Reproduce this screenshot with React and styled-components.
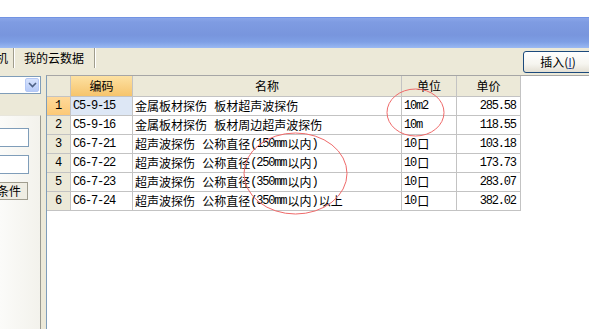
import React from "react";
import styled, { createGlobalStyle } from "styled-components";

const GlobalStyle = createGlobalStyle`
  html, body { margin: 0; padding: 0; background: #fff; }
  body { width: 589px; height: 329px; overflow: hidden; font-family: "Noto Sans CJK SC", "Liberation Sans", sans-serif; font-size: 12px; color: #000; }
  #root { width: 589px; height: 329px; }
`;

const Page = styled.div`
  width: 589px;
  height: 329px;
  display: flex;
  flex-direction: column;
  overflow: hidden;
`;

const TopBlank = styled.div`
  height: 17px;
  background: #fff;
  flex: none;
`;

const TitleBar = styled.div`
  height: 31px;
  flex: none;
  background: linear-gradient(
    #5a80dc 0px,
    #8aa6e9 1px,
    #7f9ce2 5px,
    #7895dd 18px,
    #7e9fe5 25px,
    #9ab9f3 31px
  );
`;

const Workspace = styled.div`
  flex: 1;
  background: #ece9d8;
  display: flex;
  flex-direction: column;
  min-height: 0;
`;

const TabRow = styled.div`
  height: 27px;
  flex: none;
  display: flex;
  align-items: flex-start;
`;

const Tab = styled.div`
  height: 20px;
  display: flex;
  align-items: center;
  padding: 0 ${(p) => p.$padR}px 0 10px;
  margin-left: ${(p) => p.$shift || 0}px;
  border-right: 1px solid #9f9c8c;
  box-shadow: 1px 0 0 #fff;
  font-size: 12px;
  line-height: 12px;
  white-space: nowrap;
  margin-top: 0px;
`;

const InsertButton = styled.button`
  margin-left: auto;
  margin-right: -4px;
  margin-top: 3px;
  width: 70px;
  height: 22px;
  border: 1px solid #1c4a7c;
  border-radius: 3px;
  background: linear-gradient(#ffffff 0%, #f6f5ef 60%, #e3dfd3 100%);
  font-family: "Noto Sans CJK SC", sans-serif;
  font-size: 12px;
  line-height: 12px;
  padding: 0;
  color: #000;
  display: flex;
  align-items: center;
  justify-content: center;
`;

const Hotkey = styled.span`
  text-decoration: underline;
  color: #1b3f9a;
`;

const Body = styled.div`
  flex: 1;
  display: flex;
  min-height: 0;
`;

const SidePanel = styled.div`
  width: 46px;
  flex: none;
  display: flex;
  flex-direction: column;
`;

const Combo = styled.div`
  margin-top: 1px;
  width: 41px;
  height: 18px;
  box-sizing: border-box;
  border: 1px solid #7f9db9;
  border-left: none;
  background: #fff;
  display: flex;
  justify-content: flex-end;
  align-items: stretch;
  padding: 1px;
`;

const DropButton = styled.div`
  width: 14px;
  border-radius: 2px;
  background: linear-gradient(#d7e3fd, #b7cbf8);
  border: 1px solid #b4c8f5;
  box-sizing: border-box;
  display: flex;
  align-items: center;
  justify-content: center;
`;

const FilterBox = styled.div`
  margin-top: 21px;
  width: 41px;
  flex: 1;
  box-sizing: border-box;
  border-right: 1px solid #9a9a90;
  border-top: 1px solid #e8e6dc;
  background: linear-gradient(90deg, #fbfbf9, #f3f2ec);
  display: flex;
  flex-direction: column;
  gap: 8px;
  padding-top: 12px;
  overflow: hidden;
`;

const Field = styled.div`
  width: 29px;
  height: 19px;
  box-sizing: border-box;
  border: 1px solid #7f9db9;
  border-left: none;
  background: #fff;
  flex: none;
`;

const CondButton = styled.div`
  flex: none;
  width: 62px;
  height: 18px;
  margin-left: -34px;
  box-sizing: border-box;
  border: 1px solid #a09d8f;
  background: #efede3;
  display: flex;
  align-items: center;
  justify-content: center;
  font-size: 12px;
  line-height: 12px;
  white-space: nowrap;
`;

const GridFrame = styled.div`
  position: relative;
  flex: 1;
  background: #fff;
  border-left: 1px solid #7f9db9;
  border-top: 1px solid #a6a6a6;
  overflow: hidden;
`;

const Row = styled.div`
  display: grid;
  grid-template-columns: 24px 62px 269px 55px 64px;
  height: ${(p) => (p.$header ? 21 : 19)}px;
`;

const Cell = styled.div`
  box-sizing: border-box;
  border-right: 1px solid #c3c3c3;
  border-bottom: 1px solid #c3c3c3;
  display: flex;
  align-items: center;
  justify-content: ${(p) => p.$align || "flex-start"};
  padding: 0 ${(p) => (p.$align === "flex-end" ? 3 : 2)}px 0 ${(p) => (p.$align === "flex-end" ? 0 : 2)}px;
  background: ${(p) => p.$bg || "#fff"};
  font-size: 12px;
  line-height: 12px;
  white-space: pre;
  overflow: hidden;
  font-family: "Noto Sans CJK SC", sans-serif;
`;

const Mono = styled.span`
  font-family: "Liberation Mono", monospace;
  font-size: 12px;
  letter-spacing: -1.2px;
  margin-right: 1.2px;
`;

const Overlay = styled.svg`
  position: absolute;
  left: 0;
  top: 0;
  width: 100%;
  height: 100%;
  pointer-events: none;
`;

const BEIGE = "#ece9d8";
const ORANGE = "linear-gradient(#fde1a2, #f6c46c)";
const SEL_ROW = "linear-gradient(#ffd99a, #fcc977)";
const SEL_CELL = "#dde7f5";

// Split text into runs of ASCII (half-width) and CJK (full-width)
function Mixed({ text }) {
  const parts = text.match(/[\x20-\x7e]+|[^\x20-\x7e]+/g) || [];
  return parts.map((p, i) =>
    /^[\x20-\x7e]+$/.test(p) ? <Mono key={i}>{p}</Mono> : <React.Fragment key={i}>{p}</React.Fragment>
  );
}

const rows = [
  ["C5-9-15", "金属板材探伤 板材超声波探伤", "10m2", "285.58"],
  ["C5-9-16", "金属板材探伤 板材周边超声波探伤", "10m", "118.55"],
  ["C6-7-21", "超声波探伤 公称直径(150mm以内)", "10口", "103.18"],
  ["C6-7-22", "超声波探伤 公称直径(250mm以内)", "10口", "173.73"],
  ["C6-7-23", "超声波探伤 公称直径(350mm以内)", "10口", "283.07"],
  ["C6-7-24", "超声波探伤 公称直径(350mm以内)以上", "10口", "382.02"],
];

export default function App() {
  return (
    <Page>
      <GlobalStyle />
      <TopBlank />
      <TitleBar />
      <Workspace>
        <TabRow>
          <Tab $shift={-26} $padR={5}>单机</Tab>
          <Tab $padR={10}>我的云数据</Tab>
          <InsertButton>
            插入(<Hotkey>I</Hotkey>)
          </InsertButton>
        </TabRow>
        <Body>
          <SidePanel>
            <Combo>
              <DropButton>
                <svg width="9" height="6" viewBox="0 0 9 6">
                  <path d="M1 1 L4.5 4.5 L8 1" fill="none" stroke="#4d6185" strokeWidth="1.6" />
                </svg>
              </DropButton>
            </Combo>
            <FilterBox>
              <Field />
              <Field />
              <CondButton>查询条件</CondButton>
            </FilterBox>
          </SidePanel>
          <GridFrame>
            <Row $header>
              <Cell $bg={BEIGE} />
              <Cell $bg={ORANGE} $align="center">编码</Cell>
              <Cell $bg={BEIGE} $align="center">名称</Cell>
              <Cell $bg={BEIGE} $align="center">单位</Cell>
              <Cell $bg={BEIGE} $align="center">单价</Cell>
            </Row>
            {rows.map((r, i) => (
              <Row key={r[0]}>
                <Cell $bg={i === 0 ? SEL_ROW : BEIGE} $align="center">
                  <Mono>{String(i + 1)}</Mono>
                </Cell>
                <Cell $bg={i === 0 ? SEL_CELL : "#fff"}>
                  <Mono>{r[0]}</Mono>
                </Cell>
                <Cell>
                  <Mixed text={r[1]} />
                </Cell>
                <Cell>
                  <Mixed text={r[2]} />
                </Cell>
                <Cell $align="flex-end">
                  <Mono>{r[3]}</Mono>
                </Cell>
              </Row>
            ))}
            <Overlay>
              <ellipse cx="368.5" cy="36.5" rx="28.5" ry="23.5" fill="none" stroke="#ef6a6a" strokeWidth="1" />
              <ellipse cx="248.5" cy="97.5" rx="51.5" ry="40.5" fill="none" stroke="#ef6a6a" strokeWidth="1" />
            </Overlay>
          </GridFrame>
        </Body>
      </Workspace>
    </Page>
  );
}
